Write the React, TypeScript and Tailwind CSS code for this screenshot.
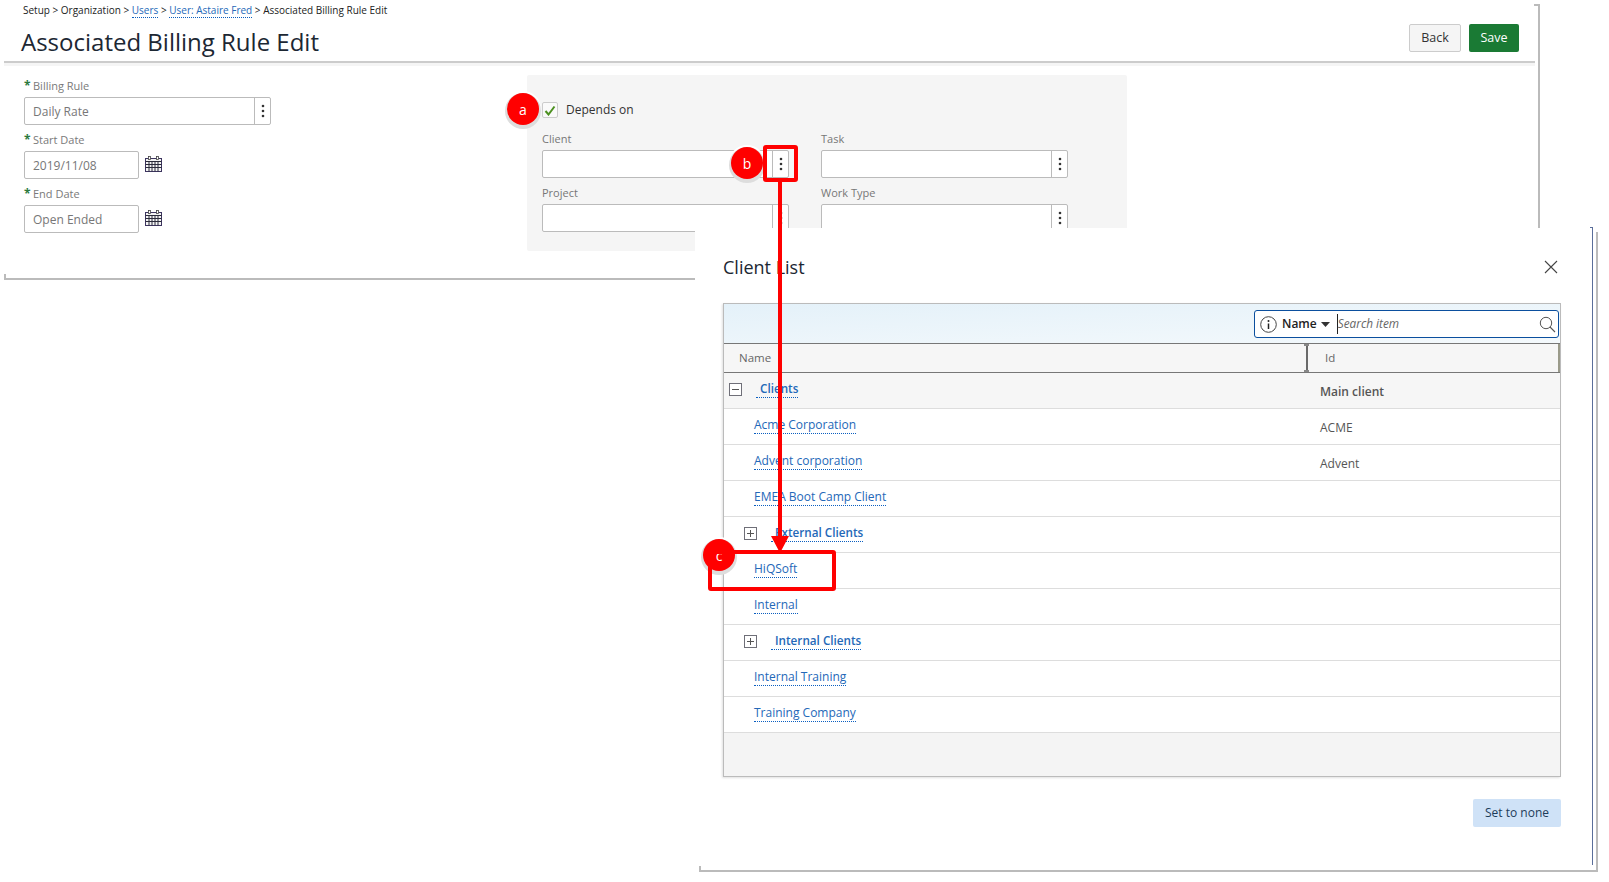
import React from "react";

const Dots = () => (
  <svg width="4" height="14" viewBox="0 0 4 14" className="block">
    <circle cx="2" cy="2" r="1.3" fill="#333" />
    <circle cx="2" cy="7" r="1.3" fill="#333" />
    <circle cx="2" cy="12" r="1.3" fill="#333" />
  </svg>
);

const Calendar = () => (
  <svg width="17" height="16" viewBox="0 0 17 16" className="mb-[2px] block shrink-0">
    <rect x="0.5" y="2.5" width="16" height="13" fill="#f4f4f4" stroke="#3d3560" />
    <path d="M0.5 5.5H16.5M0.5 8.5H16.5M0.5 11.5H16.5M4 5.5V15.5M7 5.5V15.5M10 5.5V15.5M13 5.5V15.5" stroke="#2b2b3a" strokeWidth="1" fill="none" />
    <rect x="3.5" y="0.5" width="2" height="3" fill="#fff" stroke="#444" strokeWidth="0.8" />
    <rect x="11.5" y="0.5" width="2" height="3" fill="#fff" stroke="#444" strokeWidth="0.8" />
  </svg>
);

const Req = ({ children }: { children: React.ReactNode }) => (
  <div className="flex h-[18px] items-center pb-[4px] text-[11px] font-medium text-[#7a7a7a]">
    <span className="mr-[3px] w-[6px] text-[12px] font-bold leading-[12px] text-[#2d7a3e]">*</span>
    {children}
  </div>
);

const Plain = ({ children }: { children: React.ReactNode }) => (
  <div className="flex h-[18px] items-center pb-[4px] text-[11px] text-[#777]">{children}</div>
);

const PickInput = ({ value = "" }: { value?: string }) => (
  <div className="flex h-[28px] w-[247px] rounded-[2px] border border-[#bbb] bg-white">
    <div className="flex flex-1 items-center pl-[8px] pt-[2px] text-[12px] text-[#777]">{value}</div>
    <div className="flex w-[16px] items-center justify-center border-l border-[#bbb]">
      <Dots />
    </div>
  </div>
);

const DateInput = ({ value }: { value: string }) => (
  <div className="flex items-center gap-[6px]">
    <div className="flex h-[28px] w-[115px] items-center rounded-[2px] border border-[#bbb] bg-white pl-[8px] pt-[2px] text-[12px] text-[#777]">
      {value}
    </div>
    <Calendar />
  </div>
);

const Badge = ({ letter, className }: { letter: string; className: string }) => (
  <div
    className={`absolute flex h-[32px] w-[32px] items-center justify-center rounded-full bg-[#f00] text-[14px] text-white shadow-[0_2px_0_2px_#ddd,0_0_0_2px_#fff] ${className}`}
  >
    {letter}
  </div>
);

const ClientLink = ({ children }: { children: React.ReactNode }) => (
  <span className="mb-[3px] inline-block border-b border-dotted border-[#0b5fc0] text-[12px] leading-[17px] text-[#2468b8]">
    {children}
  </span>
);

const GroupLink = ({ children }: { children: React.ReactNode }) => (
  <span className="inline-block border-b border-dotted border-[#0b5fc0] pl-[4px] text-[11.7px] font-semibold leading-[17px] text-[#2468b8]">
    {children}
  </span>
);

const TreeBox = ({ sign, className }: { sign: "plus" | "minus"; className: string }) => (
  <svg width="13" height="13" viewBox="0 0 13 13" className={`block shrink-0 ${className}`}>
    <rect x="0.5" y="0.5" width="12" height="12" fill="#fff" stroke="#6f6f78" />
    <path d={sign === "plus" ? "M3 6.5H10M6.5 3V10" : "M3 6.5H10"} stroke="#555" strokeWidth="1" />
  </svg>
);

const Row = ({ children, id }: { children: React.ReactNode; id?: string }) => (
  <div className="flex h-[36px] items-center border-b border-[#ddd] bg-white">
    <div className="flex w-[596px] items-center pl-[30px]">{children}</div>
    <div className="pt-[2px] text-[12px] text-[#555]">{id}</div>
  </div>
);

const GroupRow = ({ label }: { label: string }) => (
  <div className="flex h-[36px] items-center border-b border-[#ddd] bg-white pl-[20px]">
    <TreeBox sign="plus" className="mb-[3px]" />
    <span className="mb-[4px] ml-[14px] flex">
      <GroupLink>{label}</GroupLink>
    </span>
  </div>
);

export default function App() {
  return (
    <div className="relative h-[882px] w-[1609px] overflow-hidden bg-white font-['Open_Sans',sans-serif]">
      {/* Page frame */}
      <div className="relative ml-[4px] mt-[4px] h-[276px] w-[1536px] border-b-2 border-r-2 border-[#bbb] pr-[3px]">
        <div className="absolute -bottom-[2px] left-0 h-[6px] w-[2px] bg-[#bbb]" />
        <div className="absolute -right-[2px] top-0 h-[2px] w-[6px] bg-[#bbb]" />

        <div className="relative h-[59px] border-b-2 border-[#ccc] pl-[18px]">
          <div className="pl-[1px] text-[10px] leading-[13px] text-[#222]">
            Setup &gt; Organization &gt;{" "}
            <span className="border-b border-dotted border-[#0b5fc0] text-[#2468b8]">Users</span> &gt;{" "}
            <span className="border-b border-dotted border-[#0b5fc0] text-[#2468b8]">User: Astaire Fred</span> &gt;
            {" "}Associated Billing Rule Edit
          </div>
          <div className="-ml-[1px] mt-[8px] text-[24px] leading-[33px] text-[#1c2733]">Associated Billing Rule Edit</div>
          <div className="absolute right-[16px] top-[20px] flex gap-[8px]">
            <button className="h-[28px] w-[52px] rounded-[2px] border border-[#ccc] bg-[#f5f5f5] text-[12.5px] text-[#333]">
              Back
            </button>
            <button className="h-[28px] w-[50px] rounded-[2px] bg-[#1a7a34] text-[12.5px] text-white">Save</button>
          </div>
        </div>
        <div className="h-[3px] bg-[#f5f5f5]" />

        <div className="flex">
          <div className="ml-[20px] mt-[13px] w-[503px]">
            <Req>Billing Rule</Req>
            <PickInput value="Daily Rate" />
            <div className="mt-[8px]">
              <Req>Start Date</Req>
              <DateInput value="2019/11/08" />
            </div>
            <div className="mt-[8px]">
              <Req>End Date</Req>
              <DateInput value="Open Ended" />
            </div>
          </div>

          <div className="mt-[9px] h-[176px] w-[600px] rounded-[2px] bg-[#f5f5f5] pl-[15px] pt-[27px]">
            <div className="flex h-[16px] items-center">
              <div className="flex h-[16px] w-[16px] items-center justify-center rounded-[2px] border border-[#ccc] bg-[#fafafa]">
                <svg width="12" height="11" viewBox="0 0 12 11">
                  <path d="M1.5 6L4.5 9.5L10.5 1.5" fill="none" stroke="#4c9020" strokeWidth="2" />
                </svg>
              </div>
              <span className="ml-[8px] text-[12px] text-[#333]">Depends on</span>
            </div>
            <div className="mt-[14px] grid w-[526px] grid-cols-[247px_247px] gap-x-[32px] gap-y-[8px]">
              <div>
                <Plain>Client</Plain>
                <PickInput />
              </div>
              <div>
                <Plain>Task</Plain>
                <PickInput />
              </div>
              <div>
                <Plain>Project</Plain>
                <PickInput />
              </div>
              <div>
                <Plain>Work Type</Plain>
                <PickInput />
              </div>
            </div>
          </div>
        </div>
      </div>

      {/* Dialog outer frame */}
      <div className="absolute left-[699px] top-[232px] h-[640px] w-[899px] border-b-2 border-r-2 border-[#bbb]">
        <div className="absolute -bottom-[2px] left-0 h-[6px] w-[2px] bg-[#bbb]" />
      </div>

      {/* Dialog */}
      <div className="absolute left-[695px] top-[228px] h-[637px] w-[898px] border-r border-[#5a6e9a] bg-white pl-[28px]">
        <div className="absolute -right-px -top-px h-px w-[3px] bg-[#5a6e9a]" />
        <div className="flex h-[75px] items-start pt-[26px]">
          <div className="text-[18px] leading-[26px] text-[#1c2733]">Client List</div>
          <svg width="14" height="14" viewBox="0 0 14 14" className="absolute left-[849px] top-[32px]">
            <path d="M1 1L13 13M13 1L1 13" stroke="#444" strokeWidth="1.1" fill="none" />
          </svg>
        </div>

        <div className="w-[838px] border border-[#bbb] shadow-[-1px_1px_2px_rgba(0,0,0,0.12)]">
          <div className="relative h-[39px] bg-gradient-to-br from-[#e4f1f9] to-[#f4f9fc]">
            <div className="absolute left-[530px] top-[6px] flex h-[28px] w-[305px] items-center rounded-[3px] border border-[#0b4f9e] bg-white">
              <svg width="17" height="17" viewBox="0 0 17 17" className="ml-[5px] block shrink-0">
                <circle cx="8.5" cy="8.5" r="7.8" fill="none" stroke="#444" strokeWidth="1" />
                <circle cx="8.5" cy="5" r="1" fill="#222" />
                <path d="M8.5 7.5V13" stroke="#222" strokeWidth="1.5" />
              </svg>
              <span className="ml-[5px] text-[12px] font-semibold text-[#222]">Name</span>
              <svg width="9" height="5" viewBox="0 0 9 5" className="ml-[4px] block">
                <path d="M0 0H9L4.5 5Z" fill="#333" />
              </svg>
              <span className="ml-[7px] h-[20px] w-px bg-[#222]" />
              <span className="text-[11.8px] italic text-[#666]">Search item</span>
              <svg width="17" height="17" viewBox="0 0 17 17" className="absolute right-[2px] top-[5px]">
                <circle cx="7" cy="7" r="5.7" fill="none" stroke="#555" strokeWidth="1" />
                <path d="M11 11L16 16" stroke="#555" strokeWidth="1.1" />
              </svg>
            </div>
          </div>
          <div className="relative flex h-[30px] items-center border-y border-[#777] bg-[#f6f6f6] text-[11.5px] text-[#666]">
            <div className="flex h-full w-[584px] items-center border-r-2 border-[#6a6a6a] pl-[15px]">Name</div>
            <div className="flex h-full flex-1 items-center border-r-2 border-[#9a9a8a] pl-[17px]">Id</div>
            <div className="absolute left-[580px] top-0 h-[2px] w-[5px] bg-[#888]" />
            <div className="absolute bottom-0 left-[580px] h-[2px] w-[5px] bg-[#888]" />
          </div>
          <div className="flex h-[36px] items-center border-b border-[#ddd] bg-[#f6f6f6]">
            <div className="flex w-[596px] items-center pl-[5px]">
              <TreeBox sign="minus" className="mb-[2px]" />
              <span className="mb-[4px] ml-[14px] flex">
                <GroupLink>Clients</GroupLink>
              </span>
            </div>
            <div className="pt-[2px] text-[12px] font-semibold text-[#555]">Main client</div>
          </div>
          <Row id="ACME">
            <ClientLink>Acme Corporation</ClientLink>
          </Row>
          <Row id="Advent">
            <ClientLink>Advent corporation</ClientLink>
          </Row>
          <Row>
            <ClientLink>EMEA Boot Camp Client</ClientLink>
          </Row>
          <GroupRow label="External Clients" />
          <Row>
            <ClientLink>HiQSoft</ClientLink>
          </Row>
          <Row>
            <ClientLink>Internal</ClientLink>
          </Row>
          <GroupRow label="Internal Clients" />
          <Row>
            <ClientLink>Internal Training</ClientLink>
          </Row>
          <Row>
            <ClientLink>Training Company</ClientLink>
          </Row>
          <div className="h-[43px] bg-[#f4f4f4]" />
        </div>

        <div className="mt-[22px] flex w-[838px] justify-end">
          <button className="h-[28px] w-[88px] rounded-[2px] bg-[#cfe2f7] text-[12px] text-[#1d3c5a]">Set to none</button>
        </div>
      </div>

      {/* Annotations */}
      <Badge letter="a" className="left-[507px] top-[93px]" />
      <Badge letter="b" className="left-[731px] top-[147px]" />
      <Badge letter="c" className="left-[703px] top-[539px]" />
      <div className="absolute left-[763px] top-[145px] h-[37px] w-[35px] rounded-[3px] border-[4px] border-[#f00]" />
      <div className="absolute left-[708px] top-[550px] h-[41px] w-[128px] rounded-[3px] border-[4px] border-[#f00]" />
      <svg width="20" height="374" viewBox="0 0 20 374" className="absolute left-[770px] top-[180px]">
        <path d="M8 0H12V356H19L10 373L1 356H8Z" fill="#f00" />
      </svg>
    </div>
  );
}
